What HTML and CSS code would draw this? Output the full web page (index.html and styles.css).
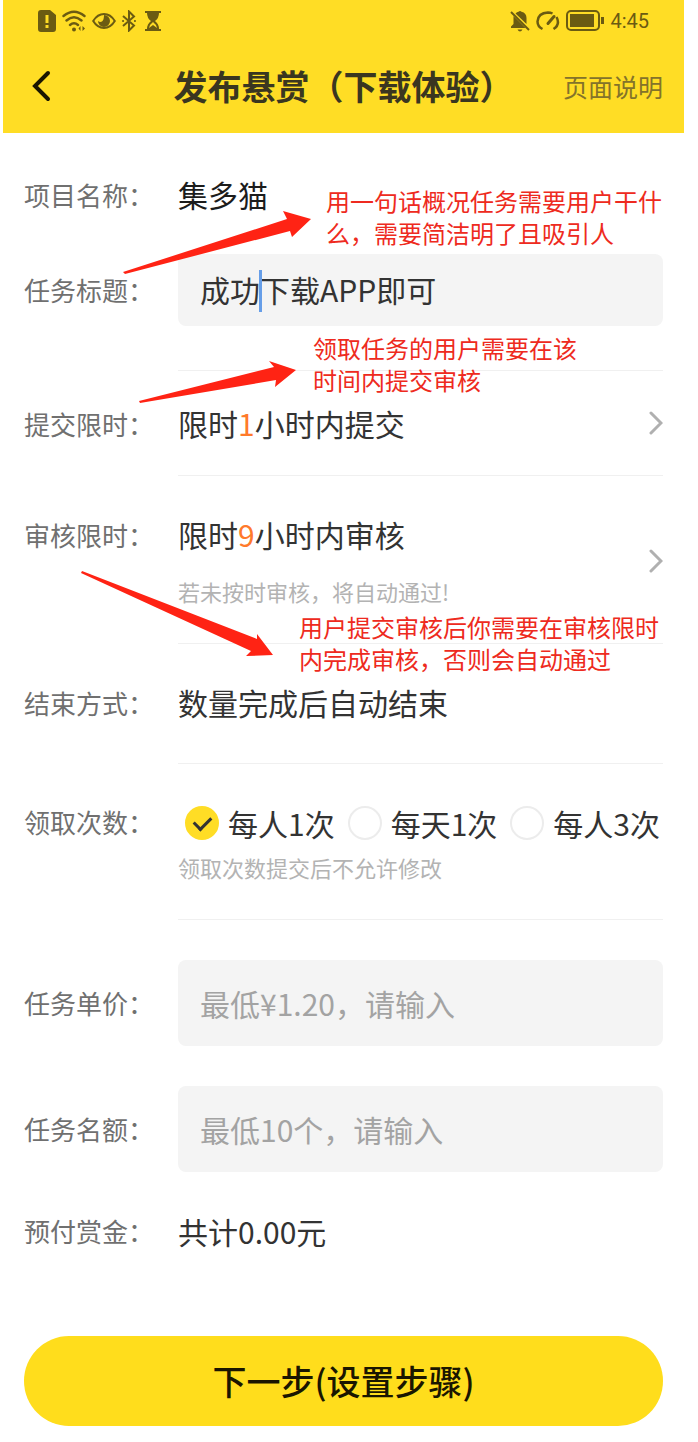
FILE: index.html
```html
<!DOCTYPE html>
<html lang="zh-CN">
<head>
    <meta charset="UTF-8">
    <meta name="viewport" content="width=device-width, initial-scale=1">
    <title>发布悬赏</title>
    <link rel="stylesheet" href="styles.css">
</head>
<body>

    <div class="page">
        <!-- Header -->
        <header class="header">
            <div class="status-bar">
                <div class="status-icons">
                    <svg width="18" height="22" viewBox="0 0 18 22">
                        <path fill="currentColor" fill-rule="evenodd" d="M3 0H12L18 5V19Q18 22 15 22H3Q0 22 0 19V3Q0 0 3 0ZM7.500 5V13H10.500V5ZM7.500 15V18H10.500V15Z"/>
                    </svg>
                    <svg width="24" height="22" viewBox="0 0 24 22" fill="none" stroke="currentColor" stroke-width="2.400" stroke-linecap="round">
                        <path d="M1.500 6Q12-2.500 22.500 6M4.500 10.500Q12 4 19.500 10.500M8 15Q12 11.500 16 15"/>
                        <circle cx="12" cy="19.500" r="2" fill="currentColor" stroke="none"/>
                        <path fill="currentColor" stroke="none" d="M18.500 16V21L16.500 18.500ZM20.500 16V21L23 18.500Z"/>
                    </svg>
                    <svg width="24" height="18" viewBox="0 0 24 18">
                        <path fill="none" stroke="currentColor" stroke-width="2" d="M1.200 9Q5.500 2 12 2T22.800 9Q18.500 16 12 16T1.200 9Z"/>
                        <path fill="currentColor" d="M12 3A6 6 0 1 1 6 9Q8 10.500 10 9.500Q12 8 12 3Z"/>
                    </svg>
                    <svg width="14" height="22" viewBox="0 0 14 22" fill="none" stroke="currentColor" stroke-width="2">
                        <path d="M1 6L12 15.500L7 20.500V1.500L12 6.500L1 16"/>
                        <path stroke-linecap="round" d="M1 11H1.100M12.900 11H13"/>
                    </svg>
                    <svg class="hourglass" width="16" height="20" viewBox="0 0 16 20">
                        <path fill="currentColor" d="M0 0H16V2H14Q14 7 10 10Q14 13 14 18H16V20H0V18H2Q2 13 6 10Q2 7 2 2H0ZM8 11Q4.500 13.500 4 17L8 14L12 17Q11.500 13.500 8 11Z"/>
                    </svg>
                </div>
                <div class="status-icons">
                    <svg width="20" height="22" viewBox="0 0 20 22">
                        <path fill="currentColor" d="M5.500 3.500Q7 2 8.500 1.800Q10 0 11.500 1.800Q16.500 3 16.500 8V14ZM3.500 6L15.500 18H1V16.500L3.500 14ZM7.500 19.500H12.500Q11.500 21.500 10 21.500T7.500 19.500Z"/>
                        <path stroke="currentColor" stroke-width="2" d="M1 2L19 20"/>
                    </svg>
                    <svg width="24" height="20" viewBox="0 0 24 20" fill="none" stroke="currentColor" stroke-width="2.500">
                        <path d="M6.500 18Q1.500 15.500 1.500 10.500Q2 2 12 1.500Q14.500 1.500 16.500 2.500M20.500 6Q24.500 13.500 17.500 18"/>
                        <path stroke-width="3" stroke-linecap="round" d="M12 12.500L18 5.500"/>
                    </svg>
                    <svg width="38" height="22" viewBox="0 0 38 22">
                        <rect x="1" y="1" width="32" height="19" rx="4" fill="none" stroke="currentColor" stroke-width="2"/>
                        <path fill="currentColor" d="M4 4H28V17H4ZM35 7H38V14H35Z"/>
                    </svg>
                    <span class="time">4:45</span>
                </div>
            </div>
            <div class="nav-bar">
                <button type="button" class="back" aria-label="返回">
                    <svg width="20" height="32" viewBox="0 0 20 32" fill="none" stroke="currentColor" stroke-width="4" stroke-linecap="round">
                        <path d="M17 3L4 16L17 29"/>
                    </svg>
                </button>
                <h1>发布悬赏（下载体验）</h1>
                <a href="#" class="help">页面说明</a>
            </div>
        </header>

        <!-- Form -->
        <form class="form">
            <div class="row">
                <span class="label">项目名称：</span>
                <div class="content no-line"><span class="value name">集多猫</span></div>
            </div>

            <div class="row row-title">
                <label class="label" for="title">任务标题：</label>
                <div class="content">
                    <div class="field">
                        <input type="text" id="title" class="input input-title" value="成功下载APP即可">
                        <span class="caret"></span>
                    </div>
                </div>
                <svg class="arrow arrow-title" width="194" height="68" viewBox="0 0 194 68">
                    <path d="M3 64L167 11L163 3L191 11L172 29L170 23L5 66Z"/>
                </svg>
                <p class="note note-title">用一句话概况任务需要用户干什<br>么，需要简洁明了且吸引人</p>
            </div>

            <div class="row row-submit">
                <span class="label">提交限时：</span>
                <button type="button" class="content picker">
                    <span class="value">限时<em>1</em>小时内提交</span>
                    <svg class="chevron" width="14" height="24" viewBox="0 0 14 24"><path d="M2 2L12 12L2 22"/></svg>
                </button>
                <svg class="arrow arrow-submit" width="164" height="48" viewBox="0 0 164 48">
                    <path d="M3 43L138 9L133 3L160 12L139 29L140 22L4 45Z"/>
                </svg>
                <p class="note note-submit">领取任务的用户需要在该<br>时间内提交审核</p>
            </div>

            <div class="row">
                <span class="label">审核限时：</span>
                <button type="button" class="content picker">
                    <span class="stack">
                        <span class="value">限时<em>9</em>小时内审核</span>
                        <span class="hint hint-review">若未按时审核，将自动通过!</span>
                    </span>
                    <svg class="chevron" width="14" height="24" viewBox="0 0 14 24"><path d="M2 2L12 12L2 22"/></svg>
                </button>
                <svg class="arrow arrow-review" width="200" height="92" viewBox="0 0 200 92">
                    <path d="M4 3L179 71L179 66L195 87L168 88L173 83L3 5Z"/>
                </svg>
                <p class="note note-review">用户提交审核后你需要在审核限时<br>内完成审核，否则会自动通过</p>
            </div>

            <div class="row row-end">
                <span class="label">结束方式：</span>
                <div class="content"><span class="value">数量完成后自动结束</span></div>
            </div>

            <div class="row row-times">
                <span class="label" id="times-label">领取次数：</span>
                <div class="content" role="radiogroup" aria-labelledby="times-label">
                    <div class="radios">
                        <label class="radio"><input type="radio" name="times" checked>每人1次</label>
                        <label class="radio"><input type="radio" name="times">每天1次</label>
                        <label class="radio"><input type="radio" name="times">每人3次</label>
                    </div>
                    <span class="hint">领取次数提交后不允许修改</span>
                </div>
            </div>

            <div class="row row-input">
                <label class="label" for="price">任务单价：</label>
                <input type="text" id="price" class="input" placeholder="最低¥1.20，请输入">
            </div>

            <div class="row row-input">
                <label class="label" for="quota">任务名额：</label>
                <input type="text" id="quota" class="input" placeholder="最低10个，请输入">
            </div>

            <div class="row row-total">
                <span class="label">预付赏金：</span>
                <div class="content no-line"><span class="value">共计0.00元</span></div>
            </div>

            <button type="submit" class="next">下一步(设置步骤)</button>
        </form>
    </div>

</body>
</html>
```
FILE: styles.css
```css
/* General Styles */
* {
    box-sizing: border-box;
}

body {
    margin: 0;
    background-color: #ffffff;
    color: #333333;
    font-family: "Noto Sans CJK SC", sans-serif;
    font-size: 30px;
    line-height: 40px;
}

button, input {
    font: inherit;
    color: inherit;
    margin: 0;
    border: none;
}

button {
    padding: 0;
    background: none;
    text-align: left;
    cursor: pointer;
}

.page {
    margin: 0 14px 0 3px;
}

/* Header */
.header {
    background-color: #ffdd25;
    padding-bottom: 22px;
}

.status-bar {
    display: flex;
    justify-content: space-between;
    height: 42px;
    padding: 0 35px;
    color: #6b5b12;
}

.status-icons {
    display: flex;
    align-items: center;
    gap: 6px;
}

.hourglass {
    margin-left: 3px;
}

.time {
    font-family: Roboto, sans-serif;
    font-size: 20px;
}

.nav-bar {
    display: grid;
    grid-template-columns: 1fr auto 1fr;
    align-items: center;
    height: 69px;
    padding: 18px 21px 0;
}

.back {
    justify-self: start;
    height: 32px;
    margin-left: 7px;
    color: #1a1600;
}

.back svg {
    display: block;
}

h1 {
    margin: 0;
    color: #3a3620;
    font-size: 34px;
    font-weight: bold;
    line-height: 48px;
    white-space: nowrap;
}

.help {
    justify-self: end;
    color: #84732a;
    font-size: 25px;
    text-decoration: none;
}

/* Form rows */
.form {
    padding: 3px 21px 16px;
}

.row {
    display: flex;
    position: relative;
}

.label {
    flex: none;
    width: 154px;
    padding-top: 39px;
    color: #707070;
    font-size: 26px;
}

.content {
    flex: 1;
    min-width: 0;
    padding: 38px 0 36px;
    border-bottom: 1px solid #f0f0f0;
}

.no-line {
    padding-bottom: 40px;
    border-bottom: none;
}

.value, .hint {
    display: block;
}

.name {
    color: #1c1c1c;
}

.value em {
    color: #ff7a2b;
    font-style: normal;
}

.hint {
    margin-top: 8px;
    color: #b3b3b3;
    font-size: 22px;
    line-height: 32px;
}

.hint-review {
    margin-top: 21px;
}

.row-title .label {
    padding-top: 16px;
}

.row-title .content {
    padding: 0 0 44px;
}

.row-submit .label {
    padding-top: 33px;
}

.row-submit .content {
    padding: 32px 0;
}

.row-end .content {
    padding-bottom: 41px;
}

.row-times .label {
    padding-top: 38px;
}

.row-times .content {
    padding-top: 39px;
}

.row-total .content {
    padding-top: 39px;
    padding-bottom: 39px;
}

.picker {
    display: flex;
    align-items: center;
    justify-content: space-between;
}

.chevron {
    fill: none;
    stroke: #b0b0b0;
    stroke-width: 3;
    stroke-linecap: round;
}

/* Inputs */
.field {
    position: relative;
}

.input {
    display: block;
    flex: 1;
    width: 100%;
    min-width: 0;
    height: 86px;
    padding: 0 22px;
    border-radius: 8px;
    background-color: #f4f4f4;
    outline: none;
}

.input-title {
    height: 72px;
    padding-bottom: 2px;
}

.input::placeholder {
    color: #a3a3a3;
    opacity: 1;
}

.caret {
    position: absolute;
    left: 81px;
    top: 16px;
    width: 3px;
    height: 42px;
    background-color: #669ee8;
}

.row-input {
    align-items: center;
    margin-top: 40px;
}

.row-input .label {
    padding-top: 0;
}

/* Radios */
.radios {
    display: flex;
    gap: 13px;
    padding-left: 7px;
}

.radio {
    display: flex;
    align-items: center;
    gap: 9px;
    white-space: nowrap;
}

.radio input {
    appearance: none;
    display: grid;
    place-items: center;
    width: 34px;
    height: 34px;
    border: 2px solid #ececec;
    border-radius: 50%;
}

.radio input:checked {
    border-color: #ffdd25;
    background-color: #ffdd25;
}

.radio input:checked::after {
    content: "";
    width: 8px;
    height: 14px;
    margin-bottom: 4px;
    border: solid #333333;
    border-width: 0 3px 3px 0;
    transform: rotate(45deg);
}

/* Red notes and arrows */
.note {
    position: absolute;
    z-index: 1;
    margin: 0;
    color: #ee2a20;
    font-size: 24px;
    line-height: 32px;
    white-space: nowrap;
    pointer-events: none;
}

.arrow {
    position: absolute;
    z-index: 1;
    fill: #ff2314;
    pointer-events: none;
}

.note-title {
    left: 302px;
    top: -69px;
}

.arrow-title {
    left: 96px;
    top: -46px;
}

.note-submit {
    left: 289px;
    top: -39px;
}

.arrow-submit {
    left: 112px;
    top: -13px;
}

.note-review {
    left: 275px;
    top: 135px;
}

.arrow-review {
    left: 54px;
    top: 92px;
}

/* Bottom button */
.next {
    display: block;
    width: 100%;
    height: 90px;
    margin-top: 46px;
    border-radius: 45px;
    background-color: #ffdd1c;
    color: #1a1600;
    font-size: 34px;
    font-weight: 500;
    text-align: center;
}
```
